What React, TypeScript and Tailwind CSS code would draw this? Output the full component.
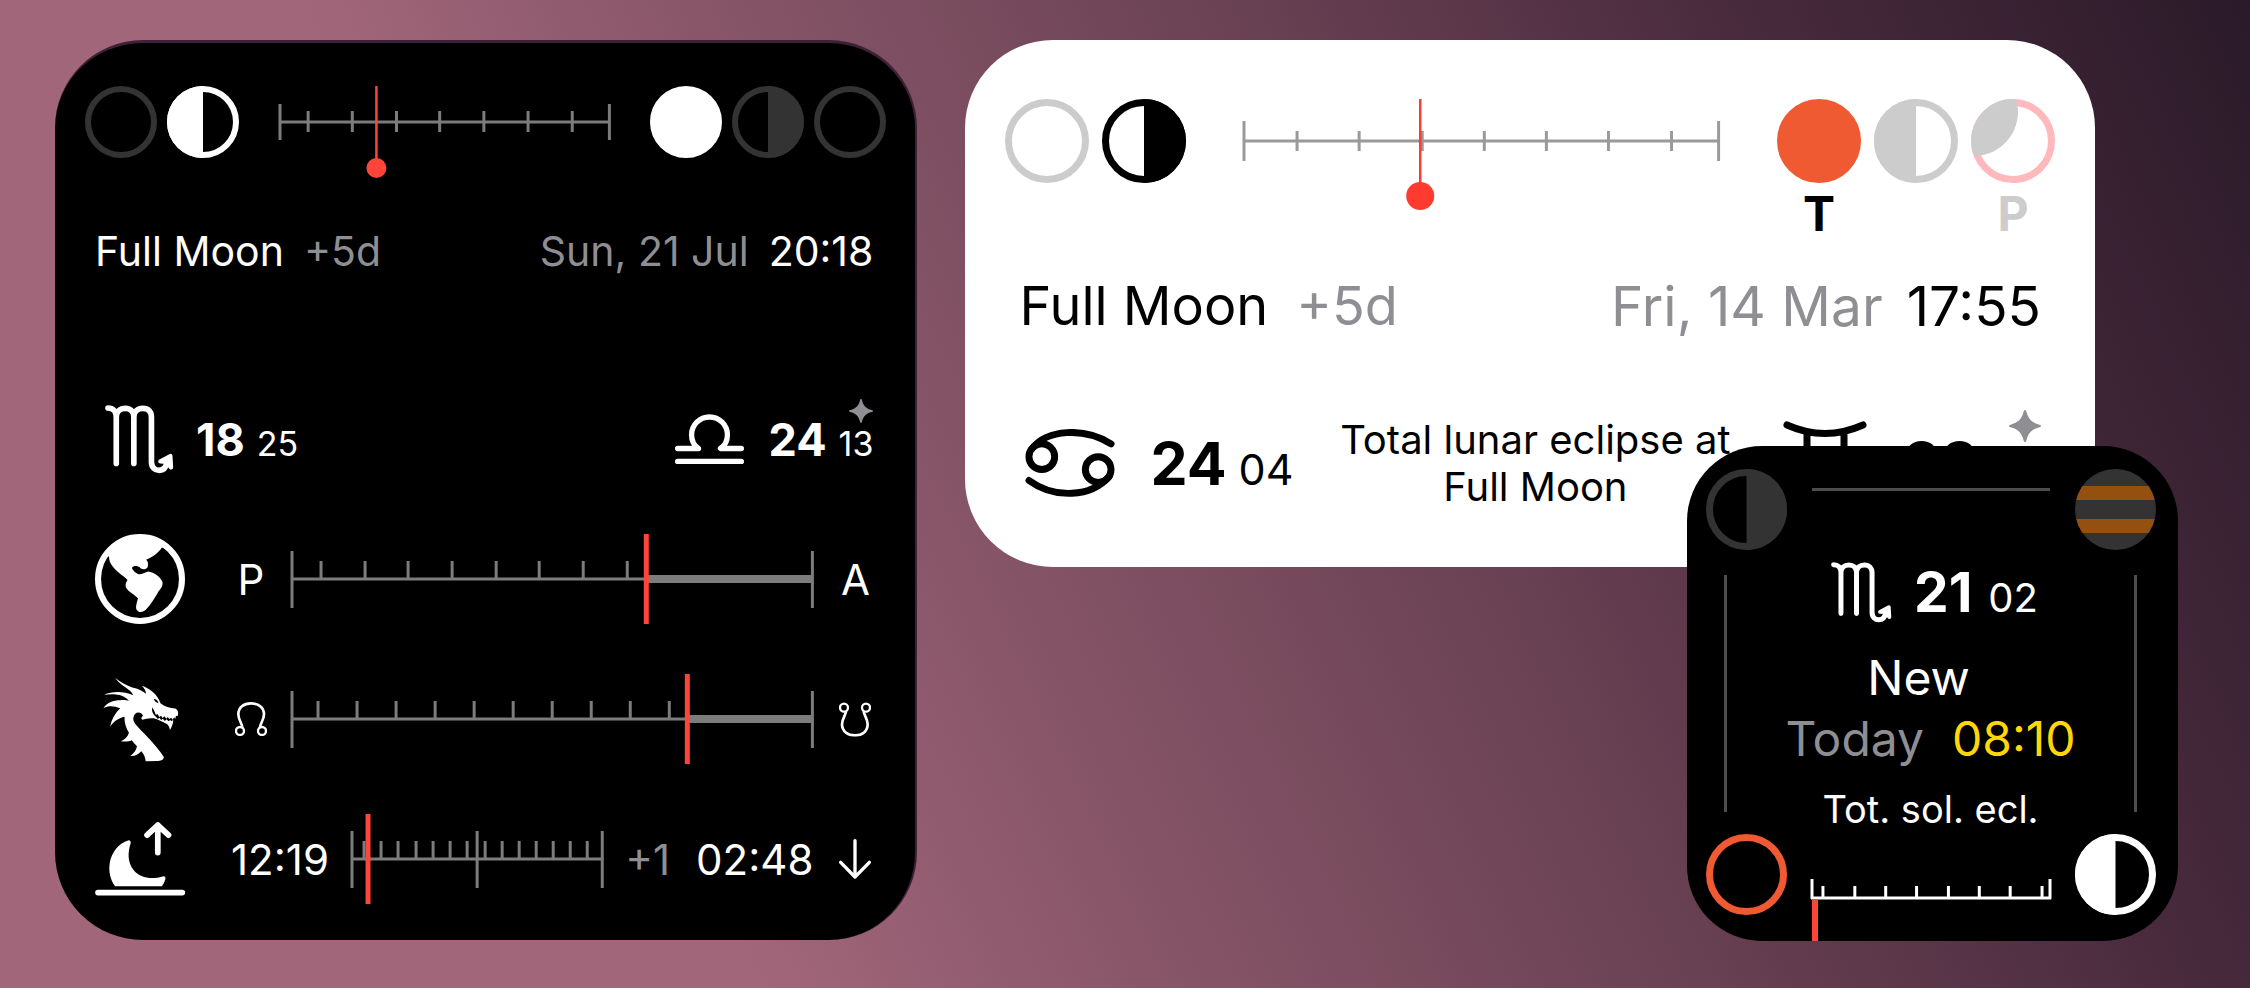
import type { ReactNode } from "react";

type Fill = "none" | "left" | "right" | "full";

function Moon({ size, ring, fill, className }: { size: number; ring: number; fill: Fill; className: string }) {
  const c = size / 2;
  return (
    <svg width={size} height={size} viewBox={`0 0 ${size} ${size}`} className={`shrink-0 ${className}`} aria-hidden="true">
      <circle cx={c} cy={c} r={c - ring / 2} fill={fill === "full" ? "currentColor" : "none"} stroke="currentColor" strokeWidth={ring} />
      {fill === "left" && <path d={`M${c} 0A${c} ${c} 0 0 0 ${c} ${size}Z`} fill="currentColor" />}
      {fill === "right" && <path d={`M${c} 0A${c} ${c} 0 0 1 ${c} ${size}Z`} fill="currentColor" />}
    </svg>
  );
}

interface Mark {
  x: number;
  y1: number;
  y2: number;
  w?: number;
}

interface ScaleProps {
  span: number;
  axis: number;
  axisWidth?: number;
  marks: Mark[];
  className: string;
  children?: ReactNode;
}

/** A ruler that stretches with its container; marks are placed in units of `span`. */
function Scale({ span, axis, axisWidth = 3, marks, className, children }: ScaleProps) {
  return (
    <svg className={`min-w-0 flex-1 overflow-visible ${className}`} aria-hidden="true">
      <line x1="0%" x2="100%" y1={axis} y2={axis} stroke="currentColor" strokeWidth={axisWidth} />
      {marks.map((m) => (
        <line
          key={m.x}
          x1={pct(m.x, span)}
          x2={pct(m.x, span)}
          y1={m.y1}
          y2={m.y2}
          stroke="currentColor"
          strokeWidth={m.w ?? 3}
        />
      ))}
      {children}
    </svg>
  );
}

const pct = (value: number, span: number) => `${(value / span) * 100}%`;

const ticks = (xs: number[], y1: number, y2: number): Mark[] => xs.map((x) => ({ x, y1, y2 }));

function Scorpio({ className }: { className: string }) {
  return (
    <svg viewBox="194 79 208 208" className={`shrink-0 ${className}`} fill="none" stroke="currentColor" strokeWidth="17" strokeLinecap="round" strokeLinejoin="round" role="img" aria-label="Scorpio">
      <path d="M203 88C218 88 228 98 228 115V255M228 115C228 98 240 89 255 89S281 98 281 115V255M281 115C281 98 293 89 308 89C325 89 334 100 334 115V250C334 268 345 276 357 276C369 276 378 268 381 252" />
      <path d="M361 249L391 233L393 267L380 250Z" fill="currentColor" strokeWidth="13" />
    </svg>
  );
}

function Libra({ className }: { className: string }) {
  return (
    <svg viewBox="590 90 208 158" className={`shrink-0 ${className}`} fill="none" stroke="currentColor" strokeWidth="16" strokeLinecap="round" strokeLinejoin="round" role="img" aria-label="Libra">
      <path d="M598 197H661C648 188 640 172 640 156A54 54 0 0 1 748 156C748 172 740 188 727 197H790M598 236H790" />
    </svg>
  );
}

function Cancer({ className }: { className: string }) {
  return (
    <svg viewBox="0 0 92 68" className={`shrink-0 ${className}`} fill="none" stroke="currentColor" strokeWidth="7" strokeLinecap="round" role="img" aria-label="Cancer">
      <ellipse cx="17" cy="28" rx="13" ry="13" />
      <ellipse cx="74" cy="41" rx="13" ry="13" />
      <path d="M7 20C22 0 60 -2 87 15M4 52C30 71 67 69 85 48" />
    </svg>
  );
}

function Gemini({ className }: { className: string }) {
  return (
    <svg viewBox="0 0 84 84" className={`shrink-0 ${className}`} fill="none" stroke="currentColor" strokeWidth="7" strokeLinecap="round" role="img" aria-label="Gemini">
      <path d="M4 4Q42 21 80 4M4 80Q42 63 80 80M24 12V72M61 12V72" />
    </svg>
  );
}

function Sparkle({ className }: { className: string }) {
  return (
    <svg viewBox="0 0 24 24" className={className} fill="currentColor" aria-hidden="true">
      <path d="M12 0C12.6 0 12.8 .6 13 1.2C14.4 6.8 17.200 9.600 22.800 11C23.400 11.200 24 11.400 24 12S23.400 12.800 22.800 13C17.200 14.400 14.400 17.200 13 22.800C12.800 23.400 12.600 24 12 24S11.200 23.400 11 22.800C9.600 17.200 6.800 14.400 1.200 13C.6 12.800 0 12.600 0 12S.6 11.200 1.200 11C6.800 9.600 9.600 6.800 11 1.200C11.200 .6 11.400 0 12 0Z" />
    </svg>
  );
}

function Globe() {
  return (
    <svg viewBox="165 463 268 268" className="size-[90px] shrink-0" role="img" aria-label="Distance from Earth">
      <circle cx="299" cy="597" r="125" fill="none" stroke="white" strokeWidth="18" />
      <path
        fill="white"
        d="M196 524L207 531C206 552 222 566 238 580C246 588 255 592 262 600C253 612 255 623 264 631C274 640 284 645 293 654C290 666 284 682 290 690C298 699 309 696 317 688C332 672 342 655 352 638C357 629 368 622 366 607C359 589 338 577 323 575C315 577 308 583 299 583C289 582 279 574 275 564C279 556 290 557 298 562C303 570 317 570 322 561C324 551 323 545 317 540C335 532 355 519 364 503L378 507C365 480 335 467 299 467C250 467 212 490 196 524Z"
      />
    </svg>
  );
}

function Dragon() {
  return (
    <svg viewBox="165 75 268 268" className="size-[90px] shrink-0" role="img" aria-label="Lunar nodes">
      <path
        fill="white"
        d="M225 86C240 98 256 108 276 115C294 119 306 124 317 134C316 125 312 117 304 110C327 117 351 135 360 162C372 172 388 176 404 178C411 181 414 187 412 199L406 200L404 209L401 204L396 211L392 205L386 209L382 203L377 208L372 201L366 206L362 199L356 203L352 195L346 196L341 184L335 174C333 186 338 196 347 203L352 209L357 205L362 212L367 208L373 215L378 210L384 216L389 212L393 216L398 211C398 222 394 232 388 242C387 234 384 227 379 224C366 218 352 210 340 207C326 205 316 209 306 211C301 208 303 202 308 199C304 190 292 187 285 193C276 202 278 216 287 226C306 248 342 280 370 322C370 329 365 333 353 334L316 335C315 325 311 313 303 305C293 315 284 320 270 319C280 312 288 302 290 290C284 284 279 278 274 272C264 277 253 277 242 275C254 270 263 262 266 250C257 235 252 219 253 202C237 206 221 214 210 232C214 211 224 192 240 177C222 170 205 168 190 177C200 160 218 153 241 153C251 152 260 153 266 155C253 136 222 132 192 137C217 126 249 126 279 138C272 119 242 112 225 86Z"
      />
      <path fill="black" d="M340 149C347 150 352 154 354 162C347 161 342 156 340 149Z" />
    </svg>
  );
}

function Moonrise() {
  return (
    <svg viewBox="165 495 268 268" className="size-[90px] shrink-0" role="img" aria-label="Moonrise">
      <path fill="white" d="M265 573Q273 574 271 583C262 610 262 640 280 662C298 686 335 691 366 681Q376 679 375 688Q372 700 364 710L225 710C210 690 205 665 209 640C214 610 235 582 265 573Z" />
      <path fill="none" stroke="white" strokeWidth="17" strokeLinecap="round" strokeLinejoin="round" d="M174 729H425M352 610V528M320 558L352 528L384 558" />
    </svg>
  );
}

function NodeGlyph({ flipped = false }: { flipped?: boolean }) {
  return (
    <svg
      viewBox="0 0 96 104"
      className={flipped ? "w-8 shrink-0 rotate-180" : "w-8 shrink-0"}
      fill="none"
      stroke="white"
      role="img"
      aria-label={flipped ? "Descending node" : "Ascending node"}
    >
      <circle cx="15" cy="87" r="12" strokeWidth="7" />
      <circle cx="81" cy="87" r="12" strokeWidth="7" />
      <path strokeWidth="8" d="M22 76C22 66 10 54 10 37C10 16 26 4 48 4S87 16 87 37C87 54 75 66 75 76" />
    </svg>
  );
}

function DownArrow() {
  return (
    <svg viewBox="0 0 96 120" className="w-8 shrink-0" fill="none" stroke="white" strokeWidth="10" strokeLinecap="round" strokeLinejoin="round" role="img" aria-label="Sets">
      <path d="M48 5V114M5 70L48 114L91 70" />
    </svg>
  );
}

function Degrees({ whole, minutes, className, large }: { whole: string; minutes: string; className: string; large: string }) {
  return (
    <span className={`flex items-baseline leading-none ${className}`}>
      <b className={large}>{whole}</b>
      <span>{minutes}</span>
    </span>
  );
}

const ends = (span: number, y1: number, y2: number): Mark[] => [
  { x: 1, y1, y2 },
  { x: span - 1, y1, y2 },
];

function TrackRow({ icon, from, to, marks, now }: { icon: ReactNode; from: ReactNode; to: ReactNode; marks: number[]; now: number }) {
  const span = 522;
  return (
    <div className="flex h-[90px] items-center">
      {icon}
      <span className="ml-[50px] flex w-8 justify-center">{from}</span>
      <Scale span={span} axis={45} marks={[...ends(span, 17, 74), ...ticks(marks, 27, 45)]} className="mr-[26px] ml-6 h-[90px] text-[#7c7c7c]">
        <line x1={pct(now, span)} x2="100%" y1="45" y2="45" stroke="currentColor" strokeWidth="8" />
        <line x1={pct(now, span)} x2={pct(now, span)} y1="0" y2="90" stroke="#ff453a" strokeWidth="5" />
      </Scale>
      <span className="flex w-8 justify-center">{to}</span>
    </div>
  );
}

function PhoneCard() {
  return (
    <section className="rounded-[88px] border-t-[3px] border-r-2 border-[#3d2237] bg-black pt-[43px] pb-9 text-[42px] text-white">
      <div className="flex items-start gap-10 pr-[29px] pl-[30px]">
        <div className="flex gap-2.5">
          <Moon size={72} ring={6} fill="none" className="text-[#333]" />
          <Moon size={72} ring={6} fill="left" className="text-white" />
        </div>
        <Scale span={330} axis={36} marks={[...ends(330, 18, 54), ...ticks([29, 73, 117, 160, 204, 248, 292], 25, 46)]} className="h-[92px] text-[#7c7c7c]">
          <line x1={pct(97, 330)} x2={pct(97, 330)} y1="0" y2="80" stroke="#ff453a" strokeWidth="2.500" />
          <circle cx={pct(97, 330)} cy="82" r="10" fill="#ff453a" />
        </Scale>
        <div className="flex gap-2.5">
          <Moon size={72} ring={6} fill="full" className="text-white" />
          <Moon size={72} ring={6} fill="right" className="text-[#333]" />
          <Moon size={72} ring={6} fill="none" className="text-[#333]" />
        </div>
      </div>

      <div className="pr-[42px] pl-10">
        <div className="mt-[49px] flex justify-between text-[41px] leading-[48px]">
          <p className="flex gap-5">
            Full Moon <span className="text-[#8e8e93]">+5d</span>
          </p>
          <p className="flex gap-5">
            <span className="text-[#8e8e93]">Sun, 21 Jul</span> <time>20:18</time>
          </p>
        </div>

        <div className="mt-[130px] flex h-[68px] items-center justify-between text-[34px]">
          <div className="flex items-center gap-[22px] pl-2.5">
            <Scorpio className="size-[69px]" />
            <Degrees whole="18" minutes="25" className="gap-3" large="text-[45px]" />
          </div>
          <div className="flex items-center gap-6">
            <Libra className="w-[69px]" />
            <span className="relative">
              <Degrees whole="24" minutes="13" className="gap-3" large="text-[45px]" />
              <Sparkle className="absolute -top-[18px] right-0 size-6 text-[#8e8e93]" />
            </span>
          </div>
        </div>

        <div className="mt-[61px] flex flex-col gap-[50px] pr-0.5">
          <TrackRow icon={<Globe />} from="P" to="A" marks={[30, 74, 117, 161, 205, 248, 292, 336]} now={355} />
          <TrackRow
            icon={<Dragon />}
            from={<NodeGlyph />}
            to={<NodeGlyph flipped />}
            marks={[27, 66, 105, 144, 183, 222, 261, 300, 339, 378]}
            now={396}
          />
          <div className="flex h-[90px] items-center">
            <Moonrise />
            <time className="ml-[46px]">12:19</time>
            <Scale
              span={252}
              axis={45}
              marks={[...ends(252, 17, 74), { x: 126, y1: 17, y2: 74 }, ...ticks([13, 30, 47, 65, 82, 99, 116, 134, 151, 168, 185, 202, 219, 236], 27, 45)]}
              className="mx-[22px] h-[90px] text-[#7c7c7c]"
            >
              <line x1={pct(17, 252)} x2={pct(17, 252)} y1="0" y2="90" stroke="#ff453a" strokeWidth="5" />
            </Scale>
            <span className="text-[#8e8e93]">+1</span>
            <time className="mx-[26px]">02:48</time>
            <DownArrow />
          </div>
        </div>
      </div>
    </section>
  );
}

function WideCard() {
  return (
    <section className="mr-[83px] rounded-[88px] bg-white pt-[59px] pb-[57px] text-black">
      <div className="flex items-start gap-[57px] px-10">
        <div className="flex gap-[13px]">
          <Moon size={84} ring={7} fill="none" className="text-[#ccc]" />
          <Moon size={84} ring={7} fill="right" className="text-black" />
        </div>
        <Scale span={476} axis={42} marks={[...ends(476, 22, 62), ...ticks([54, 116, 179, 241, 303, 365, 428], 32, 52)]} className="h-[112px] text-[#9a9a9a]">
          <line x1={pct(177, 476)} x2={pct(177, 476)} y1="0" y2="90" stroke="#ff3b30" strokeWidth="2.500" />
          <circle cx={pct(177, 476)} cy="97" r="14" fill="#ff3b30" />
        </Scale>
        <div className="flex gap-[13px] text-5xl leading-[48px] font-bold">
          <div className="flex flex-col items-center gap-[7px]">
            <Moon size={84} ring={7} fill="full" className="text-[#f05a32]" />
            <span>T</span>
          </div>
          <Moon size={84} ring={7} fill="left" className="text-[#ccc]" />
          <div className="flex flex-col items-center gap-[7px] text-[#ccc]">
            <svg viewBox="0 0 84 84" className="size-[84px]" role="img" aria-label="Partial solar eclipse">
              <circle cx="42" cy="42" r="38.500" fill="none" stroke="#ffb8bb" strokeWidth="7" />
              <path d="M45 0A42 42 0 0 0 3 57A44 44 0 0 0 45 0Z" fill="currentColor" />
            </svg>
            <span>P</span>
          </div>
        </div>
      </div>

      <div className="mt-9 flex justify-between pr-[54px] pl-[54px] text-[54px] leading-[64px]">
        <p className="flex gap-7">
          Full Moon <span className="text-[#8e8e93]">+5d</span>
        </p>
        <p className="flex gap-6 text-[55px]">
          <span className="text-[#8e8e93]">Fri, 14 Mar</span> <time>17:55</time>
        </p>
      </div>

      <div className="mt-[78px] flex h-[94px] items-center justify-between pr-[54px] pl-[60px] text-[43px]">
        <div className="flex items-center gap-[34px]">
          <Cancer className="w-[91px]" />
          <Degrees whole="24" minutes="04" className="gap-3" large="text-[59px]" />
        </div>
        <p className="mr-1.5 text-center text-[40px] leading-[47px]">
          Total lunar eclipse at
          <br />
          Full Moon
        </p>
        <div className="flex items-center gap-9">
          <Gemini className="w-[84px]" />
          <span className="relative">
            <Degrees whole="23" minutes="57" className="gap-3" large="text-[59px]" />
            <Sparkle className="absolute -top-6 right-0 size-8 text-[#8e8e93]" />
          </span>
        </div>
      </div>
    </section>
  );
}

function WatchCard() {
  return (
    <section className="relative -mt-[121px] w-[491px] self-end rounded-[75px] bg-black pt-[23px] text-white">
      <div className="flex items-center pr-[22px] pl-[19px]">
        <Moon size={81} ring={7} fill="right" className="text-[#333]" />
        <div className="mx-[25px] -mt-10 h-[3px] flex-1 bg-[#4d4d4d]" />
        <svg viewBox="0 0 81 81" className="size-[81px]" role="img" aria-label="Jupiter">
          <clipPath id="planet-disc">
            <circle cx="40.500" cy="40.500" r="40.500" />
          </clipPath>
          <g clipPath="url(#planet-disc)">
            <rect width="81" height="81" fill="#333" />
            <rect y="17" width="81" height="14" fill="#93500f" />
            <rect y="50" width="81" height="14" fill="#93500f" />
          </g>
        </svg>
      </div>

      <div className="flex h-[284px] justify-between pr-[41px] pl-[37px]">
        <div className="mt-[25px] mb-[22px] w-[3px] bg-[#4d4d4d]" />
        <div className="flex flex-col items-center text-5xl leading-[61px] whitespace-nowrap">
          <div className="mt-2.5 ml-2 flex h-16 items-center gap-[22px] text-[40px]">
            <Scorpio className="size-[61px]" />
            <Degrees whole="21" minutes="02" className="gap-4" large="text-[55px]" />
          </div>
          <p className="mt-[23px] mr-6">New</p>
          <p className="flex gap-7">
            <span className="text-[#8e8e93]">Today</span> <time className="text-[#ffd60a]">08:10</time>
          </p>
          <p className="mt-4 text-[38px] leading-[48px]">Tot. sol. ecl.</p>
        </div>
        <div className="mt-[25px] mb-[22px] w-[3px] bg-[#4d4d4d]" />
      </div>

      <div className="flex items-end gap-6 pr-[22px] pl-[19px]">
        <Moon size={81} ring={7} fill="none" className="mb-[26px] text-[#f05a32]" />
        <Scale span={241} axis={19} marks={[...ends(241, 0, 20), ...ticks([12, 44, 75, 106, 138, 169, 200, 232], 7, 19)]} className="h-[62px] text-white">
          <line x1={pct(4, 241)} x2={pct(4, 241)} y1="20" y2="62" stroke="#ff453a" strokeWidth="6" />
        </Scale>
        <Moon size={81} ring={7} fill="left" className="mb-[26px] text-white" />
      </div>
    </section>
  );
}

export default function App() {
  return (
    <main className="grid min-h-screen grid-cols-[minmax(0,862fr)_minmax(0,1212fr)] items-start gap-12 bg-[linear-gradient(65deg,#a2667a_28%,#845366_45%,#6a4253_62%,#4a2b3e_80%,#2a1a29_100%)] pt-10 pr-[72px] pb-12 pl-[55px] font-[Inter,sans-serif]">
      <PhoneCard />
      <div className="flex flex-col">
        <WideCard />
        <WatchCard />
      </div>
    </main>
  );
}
